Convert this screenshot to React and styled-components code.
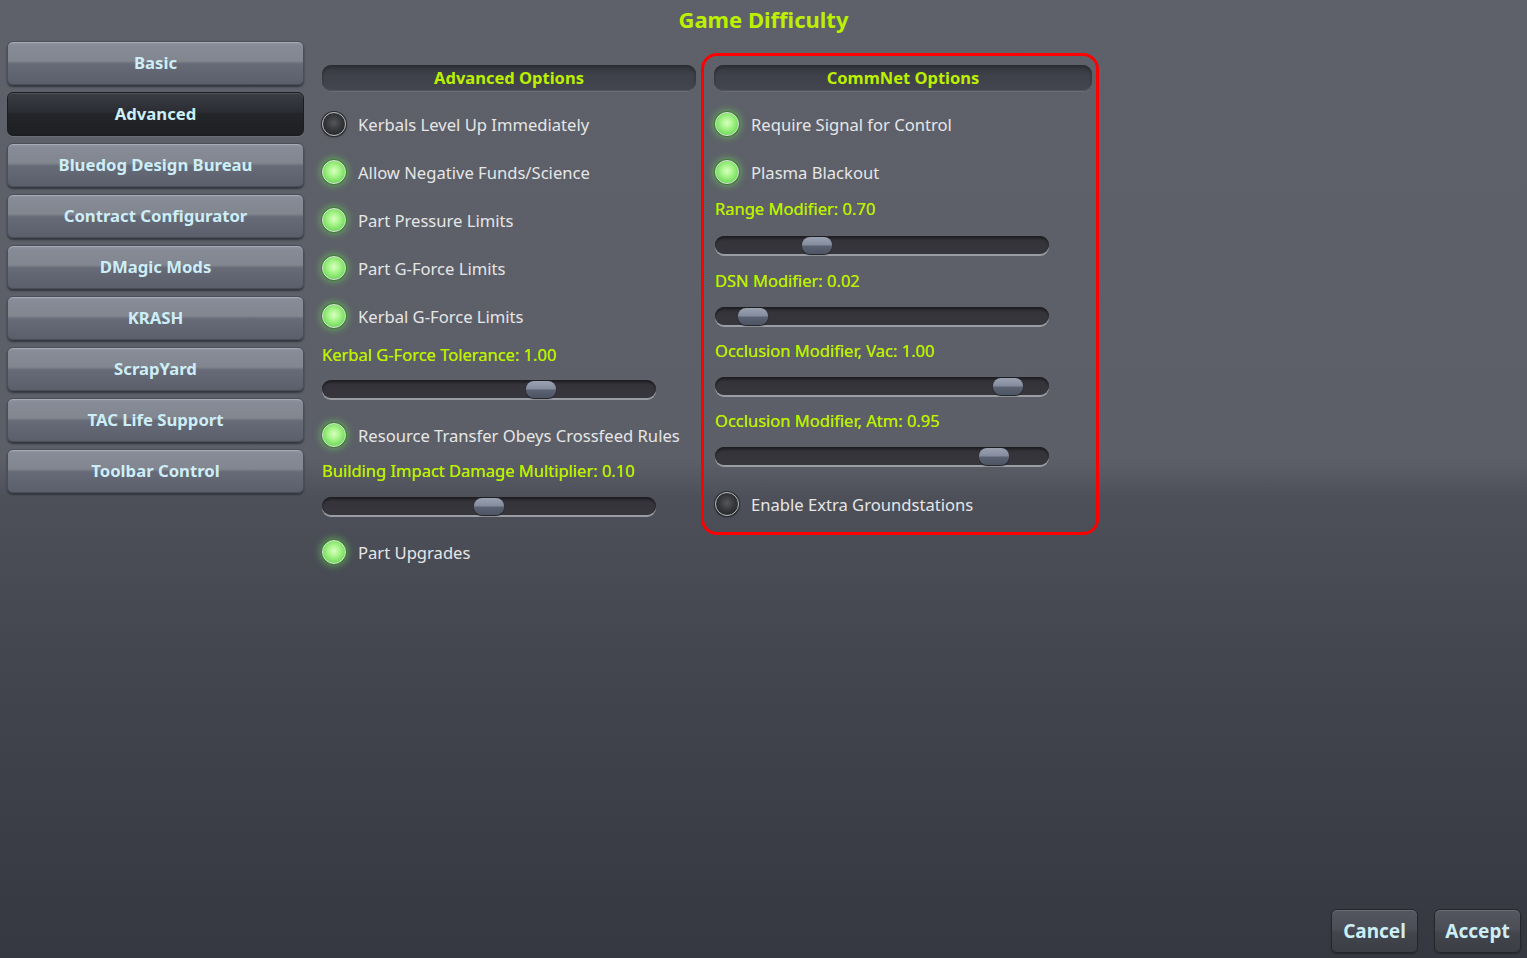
import React from 'react'
import styled, { createGlobalStyle } from 'styled-components'

const GlobalStyle = createGlobalStyle`
    html, body {
        margin: 0;
        padding: 0;
    }
    body {
        font-family: "Noto Sans", "Open Sans", sans-serif;
    }
`

const LIME = '#bcf000'

let Page = styled.div`
                    width: 100%;
                    height: 100vh;
                    display: flex;
                    flex-direction: column;
                    overflow: hidden;
                    background: linear-gradient(180deg, #5e616a 0%, #5c5f68 48%, #4d5059 52%, #42454e 70%, #353841 100%);`

let Title = styled.h1`
                    margin: 0;
                    height: 41px;
                    line-height: 39px;
                    text-align: center;
                    font-size: 22px;
                    font-weight: 700;
                    color: ${LIME};`

let Main = styled.div`
                    display: flex;
                    align-items: flex-start;
                    padding-left: 7px;`

let Sidebar = styled.nav`
                    width: 297px;
                    display: flex;
                    flex-direction: column;
                    gap: 7px;
                    margin-right: 18px;`

let SideButton = styled.button`
                    height: 44px;
                    padding-bottom: 2px;
                    border-radius: 6px;
                    border: 1px solid ${p => p.$active ? '#1b1d21' : '#4a4e58'};
                    font-family: "Noto Sans", sans-serif;
                    font-size: 16.7px;
                    font-weight: 700;
                    color: #cdeef7;
                    cursor: pointer;
                    background: ${p => p.$active
                        ? 'linear-gradient(180deg, #3a3d44 0%, #2b2d33 45%, #232529 50%, #1e2024 100%)'
                        : 'linear-gradient(180deg, #9296a2 0%, #878b97 8%, #82868f 45%, #676b78 52%, #5b5f6b 100%)'};
                    box-shadow: ${p => p.$active
                        ? 'inset 0 1px 0 #50535a, 0 1px 1px #6e717a'
                        : 'inset 0 1px 0 #a7abb5, 0 2px 2px #33363d'};`

let Column = styled.section`
                    width: 374px;
                    padding-top: 24px;
                    margin-right: 5px;`

let CommBox = styled.section`
                    width: 377px;
                    margin-top: 12px;
                    padding: 9px 4px 4px 11px;
                    border: 3px solid #ff0000;
                    border-radius: 16px;`

let HeaderBar = styled.div`
                    height: 26px;
                    line-height: 26px;
                    margin-left: ${p => p.$indent || 0}px;
                    border-radius: 9px;
                    text-align: center;
                    font-size: 16.5px;
                    font-weight: 700;
                    color: ${LIME};
                    background: linear-gradient(180deg, #34373e 0%, #3e4149 40%, #43464e 100%);
                    box-shadow: inset 0 2px 3px #2a2c31, inset 0 -1px 1px #55585f, 0 1px 0 #6a6d75;
                    margin-bottom: 9px;`

let ToggleRow = styled.div`
                    height: 48px;
                    display: flex;
                    align-items: center;
                    gap: 12px;
                    font-size: 16.6px;
                    color: #e6e6e6;`

let Dot = styled.span`
                    width: 22px;
                    height: 22px;
                    flex: none;
                    border-radius: 50%;
                    border: 1px solid ${p => p.$on ? '#d6e8d2' : '#b9babd'};
                    background: ${p => p.$on
                        ? 'radial-gradient(circle at 50% 45%, #d8ffc0 0%, #a8f48a 35%, #6fd95a 75%, #4aa83a 100%)'
                        : 'radial-gradient(circle at 50% 45%, #55575a 0%, #333538 50%, #1c1d1f 100%)'};
                    box-shadow: ${p => p.$on
                        ? '0 0 0 1px #3f7a34, 0 0 7px 2px rgba(110, 220, 90, 0.55)'
                        : '0 0 0 1px #2a2b2e, 0 1px 2px #222'};`

let ValueLabel = styled.div`
                    height: 22px;
                    line-height: 22px;
                    margin-top: ${p => p.$mt}px;
                    font-size: 16.5px;
                    color: ${LIME};
                    text-shadow: 0 0 0.4px ${LIME};`

let Track = styled.div`
                    position: relative;
                    width: 334px;
                    height: 18px;
                    box-sizing: border-box;
                    margin: ${p => p.$mt}px 0 ${p => p.$mb}px;
                    border-radius: 9px;
                    background: linear-gradient(180deg, #2a292e 0%, #35343a 30%, #37363c 100%);
                    box-shadow: inset 0 2px 2px #1f1e22, 0 2px 0 #9a9da4;`

let Knob = styled.span`
                    position: absolute;
                    top: 1px;
                    width: 30px;
                    height: 17px;
                    border-radius: 8px;
                    background: linear-gradient(180deg, #9aa2b2 0%, #858d9e 45%, #5a6272 55%, #4d5565 100%);
                    box-shadow: 0 1px 1px #1c1c20;`

let Footer = styled.footer`
                    margin-top: auto;
                    display: flex;
                    justify-content: flex-end;
                    gap: 16px;
                    padding: 0 6px 5px 0;`

let FooterButton = styled.button`
                    width: 87px;
                    height: 44px;
                    border-radius: 6px;
                    border: 1px solid #25272c;
                    font-family: "Noto Sans", sans-serif;
                    font-size: 19px;
                    font-weight: 700;
                    color: #cdeef7;
                    cursor: pointer;
                    background: linear-gradient(180deg, #54575f 0%, #4b4e56 45%, #42454c 55%, #3b3e45 100%);
                    box-shadow: inset 0 1px 0 #6a6d75, 0 1px 1px #25272c;`

const Toggle = ({ on, children }) => (
    <ToggleRow>
        <Dot $on={on} />
        <span>{children}</span>
    </ToggleRow>
)

const Slider = ({ value, mt, mb }) => (
    <Track $mt={mt} $mb={mb}>
        <Knob style={{ left: Math.round(value * 304) + 'px' }} />
    </Track>
)

const tabs = ['Basic', 'Advanced', 'Bluedog Design Bureau', 'Contract Configurator', 'DMagic Mods',
    'KRASH', 'ScrapYard', 'TAC Life Support', 'Toolbar Control']

const App = () => {
    return (
        <Page>
            <GlobalStyle />
            <Title>Game Difficulty</Title>
            <Main>
                <Sidebar>
                    {tabs.map(t => (
                        <SideButton key={t} $active={t === 'Advanced'}>{t}</SideButton>
                    ))}
                </Sidebar>
                <Column>
                    <HeaderBar>Advanced Options</HeaderBar>
                    <Toggle on={false}>Kerbals Level Up Immediately</Toggle>
                    <Toggle on>Allow Negative Funds/Science</Toggle>
                    <Toggle on>Part Pressure Limits</Toggle>
                    <Toggle on>Part G-Force Limits</Toggle>
                    <Toggle on>Kerbal G-Force Limits</Toggle>
                    <ValueLabel $mt={4}>Kerbal G-Force Tolerance: 1.00</ValueLabel>
                    <Slider value={0.67} mt={14} mb={13} />
                    <Toggle on>Resource Transfer Obeys Crossfeed Rules</Toggle>
                    <ValueLabel $mt={1}>Building Impact Damage Multiplier: 0.10</ValueLabel>
                    <Slider value={0.5} mt={15} mb={13} />
                    <Toggle on>Part Upgrades</Toggle>
                </Column>
                <CommBox>
                    <HeaderBar $indent={-1}>CommNet Options</HeaderBar>
                    <Toggle on>Require Signal for Control</Toggle>
                    <Toggle on>Plasma Blackout</Toggle>
                    <ValueLabel $mt={2}>Range Modifier: 0.70</ValueLabel>
                    <Slider value={0.286} mt={16} mb={16} />
                    <ValueLabel $mt={0}>DSN Modifier: 0.02</ValueLabel>
                    <Slider value={0.076} mt={15} mb={15} />
                    <ValueLabel $mt={0}>Occlusion Modifier, Vac: 1.00</ValueLabel>
                    <Slider value={0.915} mt={15} mb={15} />
                    <ValueLabel $mt={0}>Occlusion Modifier, Atm: 0.95</ValueLabel>
                    <Slider value={0.868} mt={15} mb={15} />
                    <Toggle on={false}>Enable Extra Groundstations</Toggle>
                </CommBox>
            </Main>
            <Footer>
                <FooterButton>Cancel</FooterButton>
                <FooterButton>Accept</FooterButton>
            </Footer>
        </Page>
    )
}

export default App
